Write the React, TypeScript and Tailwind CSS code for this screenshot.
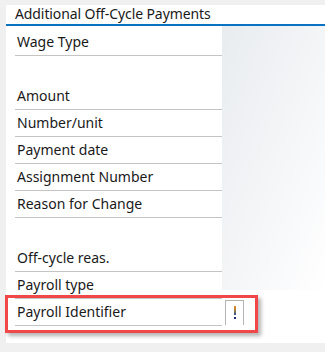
import React from "react";

const rows: (string | null)[] = [
  "Wage Type",
  null,
  "Amount",
  "Number/unit",
  "Payment date",
  "Assignment Number",
  "Reason for Change",
  null,
  "Off-cycle reas.",
  "Payroll type",
];

function Excl() {
  return (
    <svg width="4" height="14" viewBox="0 0 4 14">
      <defs>
        <linearGradient id="eg" x1="0" y1="0" x2="0" y2="1">
          <stop offset="0" stopColor="#e8892a" />
          <stop offset="0.5" stopColor="#a0803a" />
          <stop offset="1" stopColor="#2a4f9a" />
        </linearGradient>
      </defs>
      <rect x="1" y="0" width="2" height="9" fill="url(#eg)" />
      <rect x="1" y="11" width="2" height="2" fill="#1c2a78" />
    </svg>
  );
}

export default function App() {
  return (
    <div
      className="w-[325px] h-[352px] bg-[#f0f0f0] pt-[5px] pl-[6px] pb-[9px] overflow-hidden"
      style={{ fontFamily: '"Noto Sans", sans-serif' }}
    >
      <div className="relative h-full bg-white flex flex-col">
        <div className="h-[21px] pl-[9px] border-b-2 border-[#0a72c2] text-[14px] leading-[18px] tracking-[-0.1px] text-[#1a1a1a]">
          Additional Off-Cycle Payments
        </div>
        <div className="flex flex-1">
          <div className="w-[216px] pl-[9px] pt-[3px]">
            {rows.map((r, i) => (
              <div
                key={i}
                className={`h-[27px] flex items-end pb-[4px] pl-[2px] text-[14px] leading-[18px] text-[#1a1a1a] ${
                  r ? "border-b border-[#c4c4c4]" : ""
                }`}
              >
                {r}
              </div>
            ))}
            <div className="h-[27px] flex items-end border-b border-[#c4c4c4]">
              <div className="flex-1 pl-[2px] pb-[4px] text-[14px] leading-[18px] text-[#1a1a1a]">
                Payroll Identifier
              </div>
              <div className="w-[19px] h-[25px] border border-b-0 border-[#b4b4b4] flex items-center justify-center mr-[-22px]">
                <Excl />
              </div>
            </div>
          </div>
          <div className="flex-1 h-[264px] bg-gradient-to-br from-[#e9ecef] via-[#f3f5f7] to-white" />
        </div>
        <div className="absolute left-[-1px] top-[290px] w-[253px] h-[38px] border-[3px] border-[#f04848] shadow-[3px_3px_4px_rgba(0,0,0,0.3)]" />
      </div>
    </div>
  );
}
